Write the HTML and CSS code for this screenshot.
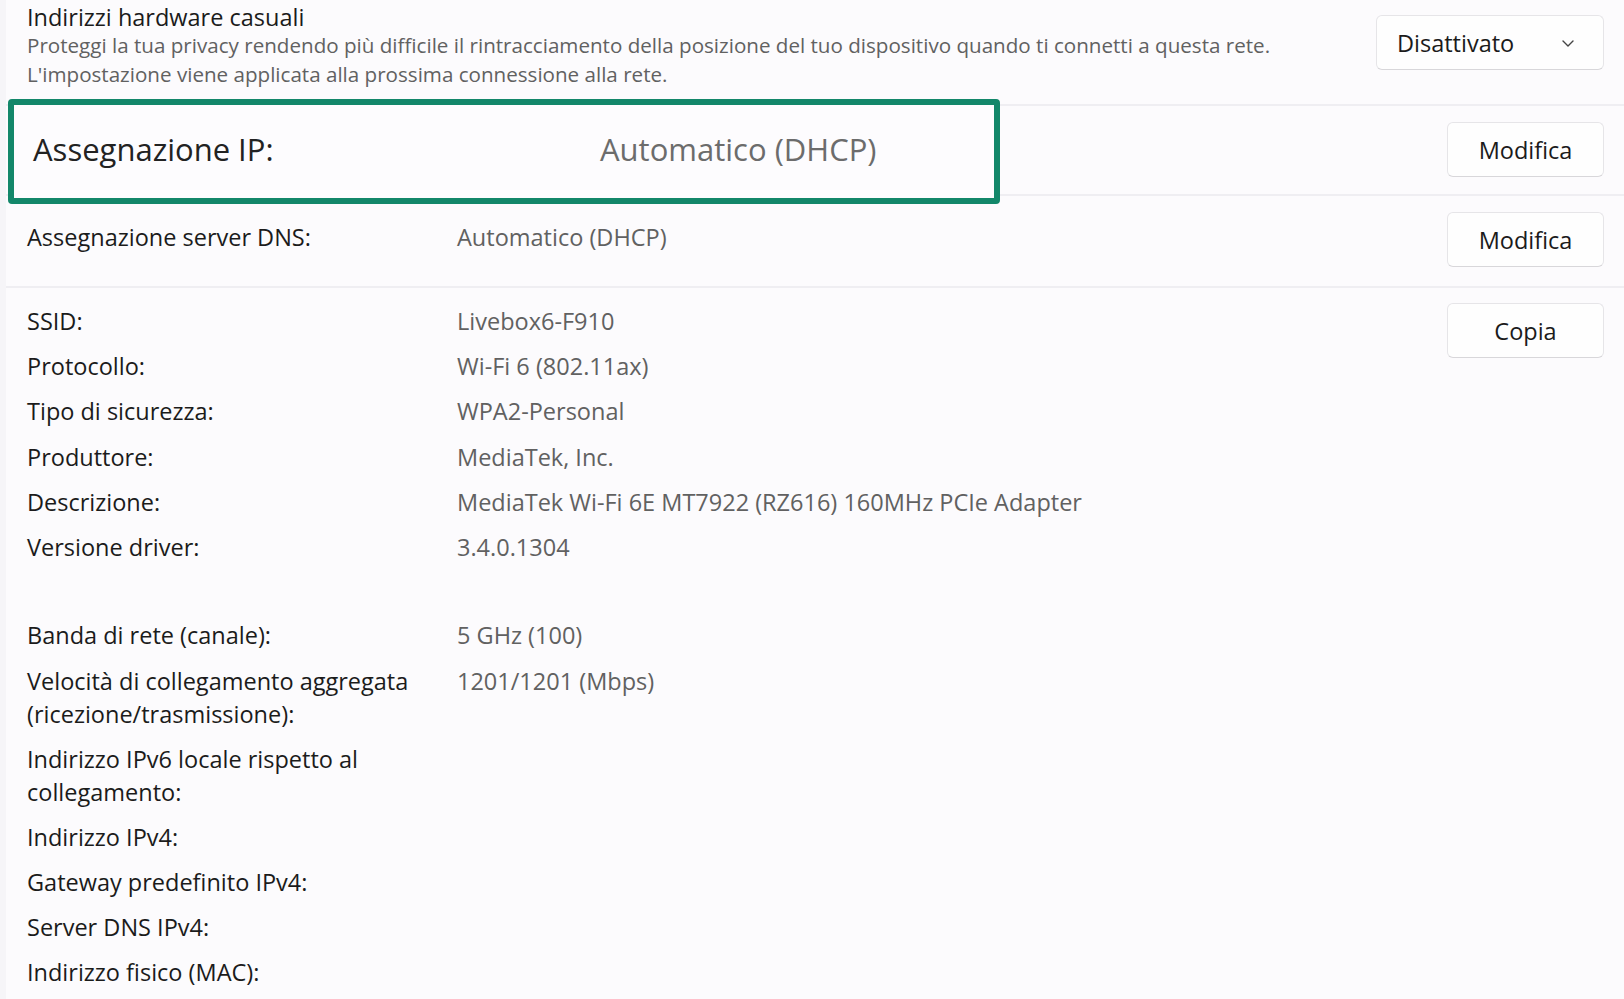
FILE: index.html
```html
<!DOCTYPE html>
<html lang="it">
<head>
  <meta charset="UTF-8">
  <title>Proprietà Wi-Fi</title>
  <link rel="stylesheet" href="styles.css">
</head>
<body>

  <div class="panel">

    <div class="row top">
      <div class="text">
        <div class="title">Indirizzi hardware casuali</div>
        <div class="desc">Proteggi la tua privacy rendendo più difficile il rintracciamento della posizione del tuo dispositivo quando ti connetti a questa rete.<br>L'impostazione viene applicata alla prossima connessione alla rete.</div>
      </div>
      <div class="select">
        <span>Disattivato</span>
        <svg width="14" height="14" viewBox="0 0 14 14"><path d="M2 5l5 5 5-5" fill="none" stroke="#444" stroke-width="1.4" stroke-linecap="round" stroke-linejoin="round"/></svg>
      </div>
    </div>

    <div class="row ip">
      <div class="callout">
        <span class="callout-label">Assegnazione IP:</span>
        <span class="callout-value">Automatico (DHCP)</span>
      </div>
      <div class="pair"></div>
      <button class="btn">Modifica</button>
    </div>

    <div class="row">
      <div class="pair">
        <span class="label">Assegnazione server DNS:</span>
        <span class="value">Automatico (DHCP)</span>
      </div>
      <button class="btn">Modifica</button>
    </div>

    <div class="row details">
      <div class="grid">
        <span class="label">SSID:</span><span class="value">Livebox6-F910</span>
        <span class="label">Protocollo:</span><span class="value">Wi-Fi 6 (802.11ax)</span>
        <span class="label">Tipo di sicurezza:</span><span class="value">WPA2-Personal</span>
        <span class="label">Produttore:</span><span class="value">MediaTek, Inc.</span>
        <span class="label">Descrizione:</span><span class="value">MediaTek Wi-Fi 6E MT7922 (RZ616) 160MHz PCIe Adapter</span>
        <span class="label">Versione driver:</span><span class="value">3.4.0.1304</span>
        <span class="spacer"></span>
        <span class="label">Banda di rete (canale):</span><span class="value">5 GHz (100)</span>
        <span class="label">Velocità di collegamento aggregata (ricezione/trasmissione):</span><span class="value">1201/1201 (Mbps)</span>
        <span class="label">Indirizzo IPv6 locale rispetto al collegamento:</span><span class="value"></span>
        <span class="label">Indirizzo IPv4:</span><span class="value"></span>
        <span class="label">Gateway predefinito IPv4:</span><span class="value"></span>
        <span class="label">Server DNS IPv4:</span><span class="value"></span>
        <span class="label">Indirizzo fisico (MAC):</span><span class="value"></span>
      </div>
      <button class="btn">Copia</button>
    </div>

  </div>

</body>
</html>
```

FILE: styles.css
```css
body {
  margin: 0;
  background: #f6f5f8;
  font-family: "Open Sans", "Noto Sans", sans-serif;
  color: #1b1b1b;
  overflow: hidden;
}
.panel {
  margin-left: 6px;
  background: #fcfbfd;
  min-height: 999px;
}
.row {
  position: relative;
  display: flex;
  align-items: flex-start;
  padding: 16px 20px 19px 21px;
  border-bottom: 2px solid #efeef2;
}
.row.top {
  padding-top: 3px;
  padding-bottom: 0;
  height: 106px;
  box-sizing: border-box;
}
.row.details {
  border-bottom: none;
  padding-top: 15px;
}
.text {
  flex: 1;
}
.title {
  font-size: 23.5px;
  line-height: 28px;
}
.desc {
  font-size: 20.6px;
  line-height: 28.5px;
  color: #616161;
}
.select {
  margin-top: 12px;
  width: 228px;
  height: 55px;
  box-sizing: border-box;
  display: flex;
  align-items: center;
  justify-content: space-between;
  padding: 0 28px 0 20px;
  background: #fefefe;
  border: 1px solid #e6e5e8;
  border-bottom-color: #d8d7da;
  border-radius: 6px;
  font-size: 23.5px;
}
.pair {
  flex: 1;
  display: flex;
  padding-top: 8px;
  line-height: 34px;
  font-size: 23.5px;
}
.pair .label {
  width: 430px;
}
.value {
  color: #616161;
}
.btn {
  width: 157px;
  height: 55px;
  background: #fefefe;
  border: 1px solid #e6e5e8;
  border-bottom-color: #d8d7da;
  border-radius: 6px;
  font-family: inherit;
  font-size: 23.5px;
  color: #1b1b1b;
}
.row.ip {
  height: 90px;
  box-sizing: border-box;
}

/* zoomed highlight over the IP assignment row */
.callout {
  position: absolute;
  left: 2px;
  top: -7px;
  width: 992px;
  height: 105px;
  box-sizing: border-box;
  border: 6px solid #13876a;
  border-radius: 4px;
  background: #fdfcfe;
  display: flex;
  align-items: center;
  padding: 0 0 5px 19px;
  font-size: 31px;
  z-index: 1;
}
.callout-label {
  width: 567px;
  color: #222;
}
.callout-value {
  color: #6c6c6c;
}

.grid {
  flex: 1;
  display: grid;
  grid-template-columns: 430px 1fr;
  row-gap: 12.2px;
  padding-top: 2px;
  font-size: 23.5px;
  line-height: 33px;
}
.grid .label {
  padding-right: 22px;
}
.spacer {
  grid-column: 1 / 3;
  height: 31px;
}
```
